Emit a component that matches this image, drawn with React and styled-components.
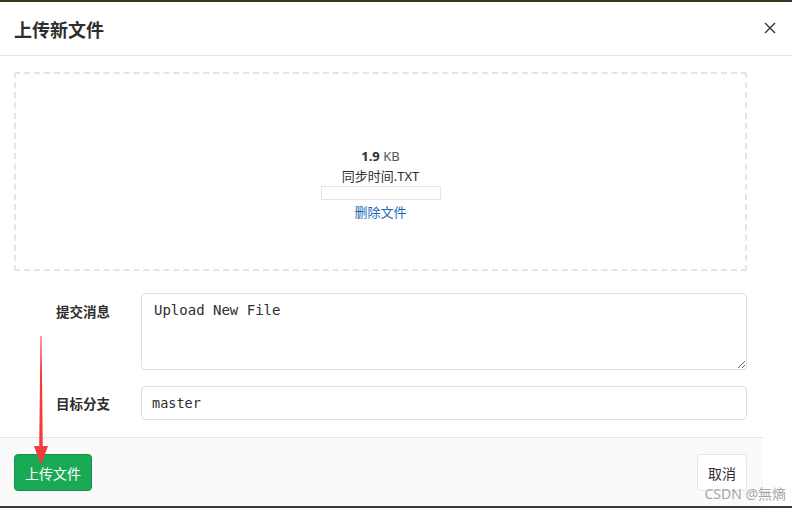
import styled, { createGlobalStyle } from "styled-components";

const GlobalStyle = createGlobalStyle`
  html, body {
    margin: 0;
    padding: 0;
    background: #fff;
  }
  body {
    font-family: "Noto Sans", "Noto Sans CJK SC", sans-serif;
    color: #2e2e2e;
  }
`;

const Page = styled.div`
  position: relative;
  width: 792px;
  height: 508px;
  overflow: hidden;
  background: #fff;
  border-top: 2px solid #3d3322;
  box-sizing: border-box;
`;

const Header = styled.header`
  height: 53px;
  display: flex;
  align-items: center;
  justify-content: space-between;
  padding: 0 14px;
  border-bottom: 1px solid #e5e5e5;
`;

const Title = styled.h3`
  margin: 0;
  font-size: 18px;
  font-weight: 700;
  color: #2e2e2e;
  font-family: "Noto Sans CJK SC", sans-serif;
`;

const Close = styled.button`
  border: 0;
  background: none;
  padding: 0;
  width: 14px;
  height: 14px;
  display: flex;
  cursor: pointer;
`;

const Body = styled.div`
  width: 763px;
  box-sizing: border-box;
  padding: 16px 16px 0 14px;
`;

const DropZone = styled.div`
  height: 199px;
  box-sizing: border-box;
  border: 2px dashed #e5e5e5;
  border-radius: 2px;
  display: flex;
  flex-direction: column;
  align-items: center;
  padding-top: 72px;
  font-size: 13px;
  line-height: 20px;
  font-family: "Noto Sans", "Noto Sans CJK SC", sans-serif;
`;

const Size = styled.div`
  color: #555;
  b {
    color: #2e2e2e;
    font-weight: 700;
  }
`;

const FileName = styled.div`
  color: #2e2e2e;
`;

const Progress = styled.div`
  width: 120px;
  height: 14px;
  box-sizing: border-box;
  border: 1px solid #e5e5e5;
  background: #fff;
`;

const RemoveLink = styled.a`
  margin-top: 2px;
  color: #1b69b6;
  text-decoration: none;
  cursor: pointer;
`;

const Row = styled.div`
  display: grid;
  grid-template-columns: 127px 1fr;
  margin-top: ${(p) => p.$top}px;
  align-items: start;
`;

const Label = styled.label`
  text-align: right;
  padding-right: 31px;
  padding-top: ${(p) => p.$pt}px;
  font-size: 13.5px;
  font-weight: 700;
  line-height: 20px;
  color: #2e2e2e;
  font-family: "Noto Sans CJK SC", sans-serif;
`;

const TextArea = styled.textarea`
  display: block;
  width: 100%;
  height: 77px;
  box-sizing: border-box;
  padding: 6px 12px;
  border: 1px solid #dfdfdf;
  border-radius: 4px;
  font-family: "DejaVu Sans Mono", monospace;
  font-size: 14px;
  line-height: 20px;
  color: #2e2e2e;
  resize: vertical;
  outline: none;
`;

const Input = styled.input`
  display: block;
  width: 100%;
  height: 34px;
  box-sizing: border-box;
  padding: 0 10px;
  border: 1px solid #dfdfdf;
  border-radius: 4px;
  font-family: "DejaVu Sans Mono", monospace;
  font-size: 13.5px;
  color: #2e2e2e;
  outline: none;
`;

const Footer = styled.footer`
  margin-top: 17px;
  width: 763px;
  height: 68px;
  box-sizing: border-box;
  border-top: 1px solid #e5e5e5;
  background: #fafafa;
  display: flex;
  justify-content: space-between;
  align-items: flex-start;
  padding: 16px 16px 0 14px;
`;

const Button = styled.button`
  height: 37px;
  box-sizing: border-box;
  padding: 0 10px;
  border-radius: 4px;
  border: 1px solid ${(p) => (p.$primary ? "#168f48" : "#e5e5e5")};
  background: ${(p) => (p.$primary ? "#1aaa55" : "#fff")};
  color: ${(p) => (p.$primary ? "#fff" : "#2e2e2e")};
  font-size: 14px;
  font-family: "Noto Sans CJK SC", sans-serif;
  cursor: pointer;
`;

const Arrow = styled.svg`
  position: absolute;
  left: 30px;
  top: 334px;
  pointer-events: none;
`;

const Watermark = styled.div`
  position: absolute;
  right: 6px;
  bottom: 5px;
  font-size: 14px;
  color: rgba(150, 150, 150, 0.85);
  font-family: "Noto Sans", "Noto Sans CJK TC", sans-serif;
  pointer-events: none;
`;

const BottomLine = styled.div`
  position: absolute;
  left: 0;
  right: 0;
  bottom: 0;
  height: 2px;
  background: #3a3a3a;
`;

export default function App() {
  return (
    <>
      <GlobalStyle />
      <Page>
        <Header>
          <Title>上传新文件</Title>
          <Close aria-label="关闭">
            <svg width="12" height="12" viewBox="0 0 12 12">
              <path d="M1 1L11 11M11 1L1 11" stroke="#333" strokeWidth="1.4" />
            </svg>
          </Close>
        </Header>
        <Body>
          <DropZone>
            <Size>
              <b>1.9</b> KB
            </Size>
            <FileName>同步时间.TXT</FileName>
            <Progress />
            <RemoveLink>删除文件</RemoveLink>
          </DropZone>
          <Row $top={22}>
            <Label $pt={8}>提交消息</Label>
            <TextArea defaultValue="Upload New File" />
          </Row>
          <Row $top={16}>
            <Label $pt={7}>目标分支</Label>
            <Input defaultValue="master" />
          </Row>
        </Body>
        <Footer>
          <Button $primary>上传文件</Button>
          <Button>取消</Button>
        </Footer>
        <Arrow width="22" height="130" viewBox="0 0 22 130">
          <polygon points="10.5,0 11.5,0 12.8,112 9.2,112" fill="#f53a3a" />
          <polygon points="4,110 18,110 11,129" fill="#f53a3a" />
        </Arrow>
        <Watermark>CSDN @無熵</Watermark>
        <BottomLine />
      </Page>
    </>
  );
}
